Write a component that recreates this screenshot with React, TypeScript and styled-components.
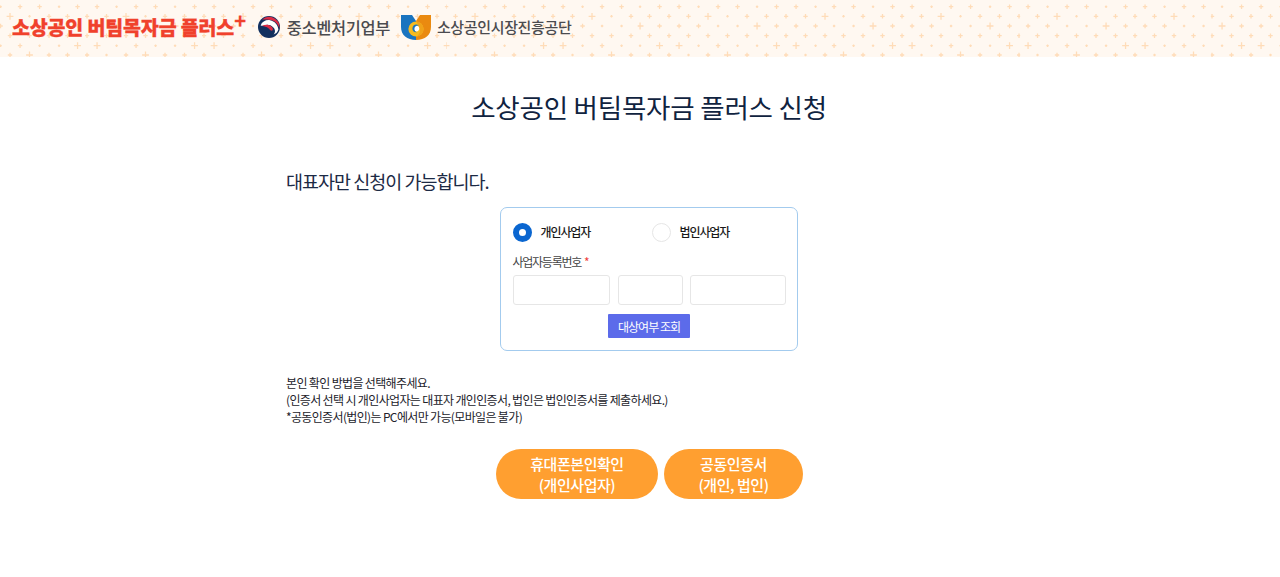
import React from 'react';
import styled, { createGlobalStyle } from 'styled-components';

// plus pattern of the header, one tile is 116.4 x 58 (sizes: s, m, l)
const plusRows: [number, string][] = [
  [6.7, 'msmmsm'],
  [16.3, 'mmlsmm'],
  [26, 'mmsslm'],
  [35.7, 'mmmmmm'],
  [45.7, 'lsmssl'],
  [55, 'msmlmm'],
];
const plusSize: Record<string, number> = { s: 1.2, m: 2.2, l: 3.4 };

const buildPattern = () => {
  let shapes = '';
  plusRows.forEach(([y, sizes], row) => {
    sizes.split('').forEach((s, i) => {
      const x = (row % 2 === 0 ? 12 : 2) + i * 19.4;
      const r = plusSize[s];
      shapes += `<path d='M${x - r} ${y}H${x + r}M${x} ${y - r}V${y + r}' stroke='#ffdcb8' stroke-width='1.3'/>`;
    });
  });
  return `url("data:image/svg+xml,${encodeURIComponent(
    `<svg xmlns='http://www.w3.org/2000/svg' width='116.4' height='58'>${shapes}</svg>`
  )}")`;
};

const GlobalStyle = createGlobalStyle`
  html, body {
    margin: 0;
    padding: 0;
    background: #fff;
    font-family: "Noto Sans CJK KR", "Noto Sans", sans-serif;
  }
  * { box-sizing: border-box; }
`;

const Header = styled.header`
  display: flex;
  align-items: center;
  height: 57px;
  padding: 0 0 4px 12px;
  background-color: #fff8f1;
  background-image: ${buildPattern()};
  background-position: -31px 0;
`;

const Brand = styled.h1`
  margin: 0 12px 0 0;
  font-size: 19.5px;
  font-weight: 900;
  letter-spacing: -0.15px;
  color: #f0412c;
  -webkit-text-stroke: 0.3px #f0412c;
  white-space: nowrap;
  line-height: 28px;

  sup {
    font-size: 20px;
    line-height: 0;
    vertical-align: 7px;
    font-weight: 700;
  }
`;

const Org = styled.div<{ $gap: number; $size: number }>`
  display: flex;
  align-items: center;
  gap: ${(p) => p.$gap}px;
  margin-right: 11px;
  font-size: ${(p) => p.$size}px;
  font-weight: 500;
  letter-spacing: -0.35px;
  color: #4b4b4f;
  white-space: nowrap;

  svg {
    flex: none;
  }
`;

const LogoShift = styled.span`
  display: flex;
  margin-top: 2px;
`;

const Main = styled.main`
  width: 726px;
  margin-left: 286px;
  display: flex;
  flex-direction: column;
`;

const Title = styled.h2`
  margin: 30px 0 0;
  text-align: center;
  font-size: 26.5px;
  line-height: 40px;
  font-weight: 400;
  letter-spacing: -0.2px;
  color: #10233f;
`;

const Notice = styled.p`
  margin: 39px 0 0;
  font-size: 18.5px;
  line-height: 30px;
  font-weight: 400;
  letter-spacing: -1px;
  color: #1c2a45;
`;

const FormBox = styled.form`
  align-self: center;
  width: 298px;
  height: 144px;
  margin-top: 11px;
  margin-right: 1px;
  padding: 0 11px 0 12px;
  border: 1px solid #a3cbee;
  border-radius: 7px;
  display: flex;
  flex-direction: column;
`;

const RadioRow = styled.div`
  display: flex;
  margin-top: 14px;
  height: 20px;
`;

const RadioItem = styled.label`
  flex: none;
  width: 139px;
  display: flex;
  align-items: center;
  gap: 9px;
  font-size: 12px;
  font-weight: 500;
  letter-spacing: -1.1px;
  color: #1a1a1a;
  padding-bottom: 1px;
`;

const RadioDot = styled.span<{ $on?: boolean }>`
  width: 19px;
  height: 19px;
  margin-top: 1px;
  border-radius: 50%;
  background: #fff;
  border: ${(p) => (p.$on ? '6px solid #0a66d0' : '1px solid #e6e6e6')};
`;

const FieldLabel = styled.div`
  margin-top: 10px;
  font-size: 12px;
  line-height: 20px;
  letter-spacing: -1.25px;
  color: #444;

  em {
    font-style: normal;
    color: #f0413c;
    margin-left: 3px;
  }
`;

const InputRow = styled.div`
  display: flex;
  gap: 7.5px;
  margin-top: 3px;
`;

const NumberInput = styled.input<{ $width: number }>`
  width: ${(p) => p.$width}px;
  height: 30px;
  border: 1px solid #e6e6e6;
  border-radius: 3px;
  background: #fff;
  outline: none;
`;

const CheckButton = styled.button`
  align-self: center;
  width: 82px;
  height: 24px;
  margin-top: 9px;
  padding: 0;
  border: none;
  border-radius: 1px;
  background: #5c6bea;
  color: #fff;
  font-family: inherit;
  font-size: 12px;
  font-weight: 400;
  letter-spacing: -1px;
`;

const Guide = styled.div`
  margin-top: 23px;
  font-size: 12px;
  line-height: 17px;
  letter-spacing: -0.65px;
  color: #22222a;
`;

const AuthRow = styled.div`
  display: flex;
  gap: 6px;
  margin: 24px 0 0 210px;
`;

const AuthButton = styled.button<{ $width: number }>`
  width: ${(p) => p.$width}px;
  height: 50px;
  padding: 0;
  border: none;
  border-radius: 25px;
  background: #ff9f30;
  color: #fff;
  font-family: inherit;
  font-size: 15px;
  line-height: 21px;
  font-weight: 500;
  letter-spacing: -0.45px;
`;

const TaegeukLogo = () => (
  <svg width="22" height="22" viewBox="0 0 22 22">
    <circle cx="11" cy="11" r="11" fill="#12305f" />
    <path d="M4 3.6A10.4 10.4 0 0 1 21.4 12.4C20.6 9 18 5.6 14.4 4.4C10.6 3.2 7 3.4 4 3.6Z" fill="#dc2b45" />
    <path d="M2.6 9.4C4 5.6 8 3.6 12 4.2C16.6 5 20 8.8 20.4 13.6C19.4 16.6 17.6 18 15.6 18.4C17.4 16.6 17.6 13.6 15.4 11.4C12.6 8.6 9 8.4 6.4 9.4C5 10 3.6 10 2.6 9.4Z" fill="#fff" />
    <path d="M4 10C7 8.2 11 8.4 13.6 10.8C15.2 12.2 15.2 13.8 14.4 14.6C12.6 15 11.8 13.4 10.4 12.2C8.6 10.8 6.4 10.2 4 10Z" fill="#dc2b45" />
  </svg>
);

const SemasLogo = () => (
  <svg width="30" height="25" viewBox="0 0 30 25">
    <path d="M0 0H11L15 6V25C6 25 0 20 0 12Z" fill="#1a74bf" />
    <path d="M30 0H19L15 6V25C24 25 30 20 30 12Z" fill="#ea8a10" />
    <circle cx="15" cy="14" r="7.6" fill="#f6bb1e" />
    <path d="M15 6.4A7.6 7.6 0 0 1 15 21.6C18.6 20 19.8 16.4 18.6 13C17.8 10.4 16.4 8 15 6.4Z" fill="#f0a21a" />
    <circle cx="15.4" cy="13.6" r="2.8" fill="#fff" />
    <path d="M11.4 13.4C11.6 10 15 8.4 18 10.6C15.4 10.2 13.4 11.4 13.4 14C13.4 15.6 14.4 16.8 16 17.2C13.6 17.8 11.2 16 11.4 13.4Z" fill="#1a74bf" />
  </svg>
);

const App: React.FC = () => {
  return (
    <>
      <GlobalStyle />
      <Header>
        <Brand>
          소상공인 버팀목자금 플러스<sup>+</sup>
        </Brand>
        <Org $gap={7} $size={16.4}>
          <TaegeukLogo />
          중소벤처기업부
        </Org>
        <Org $gap={6} $size={15}>
          <LogoShift>
            <SemasLogo />
          </LogoShift>
          소상공인시장진흥공단
        </Org>
      </Header>
      <Main>
        <Title>소상공인 버팀목자금 플러스 신청</Title>
        <Notice>대표자만 신청이 가능합니다.</Notice>
        <FormBox>
          <RadioRow>
            <RadioItem>
              <RadioDot $on />
              개인사업자
            </RadioItem>
            <RadioItem>
              <RadioDot />
              법인사업자
            </RadioItem>
          </RadioRow>
          <FieldLabel>
            사업자등록번호<em>*</em>
          </FieldLabel>
          <InputRow>
            <NumberInput $width={97.5} />
            <NumberInput $width={65} />
            <NumberInput $width={95.5} />
          </InputRow>
          <CheckButton type="button">대상여부 조회</CheckButton>
        </FormBox>
        <Guide>
          본인 확인 방법을 선택해주세요.
          <br />
          (인증서 선택 시 개인사업자는 대표자 개인인증서, 법인은 법인인증서를 제출하세요.)
          <br />
          *공동인증서(법인)는 PC에서만 가능(모바일은 불가)
        </Guide>
        <AuthRow>
          <AuthButton type="button" $width={162}>
            휴대폰본인확인
            <br />
            (개인사업자)
          </AuthButton>
          <AuthButton type="button" $width={139}>
            공동인증서
            <br />
            (개인, 법인)
          </AuthButton>
        </AuthRow>
      </Main>
    </>
  );
};

export default App;
